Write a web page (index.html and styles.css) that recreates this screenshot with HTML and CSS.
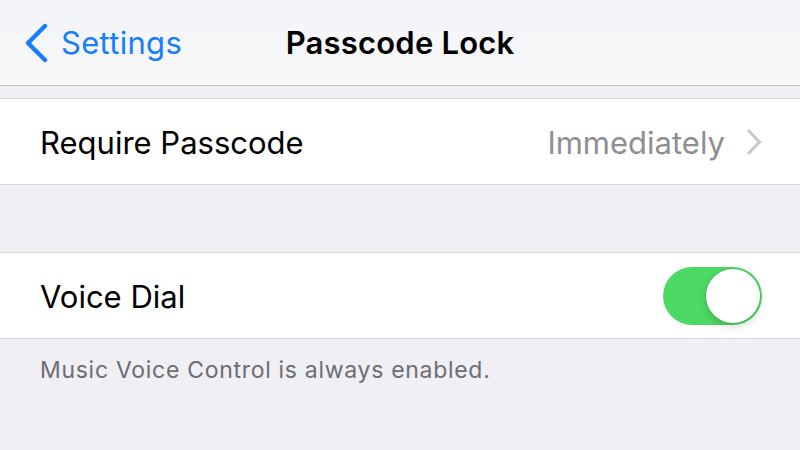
FILE: index.html
```html
<!DOCTYPE html>
<html>
<head>
<meta charset="utf-8">
<link rel="stylesheet" href="styles.css">
</head>
<body>
<header class="nav">
  <a class="back">
    <svg class="back-icon" width="26" height="40" viewBox="0 0 26 40"><path d="M22 3 L5 20 L22 37" fill="none" stroke="#167efb" stroke-width="4.4" stroke-linecap="round" stroke-linejoin="round"/></svg>
    <span class="back-label">Settings</span>
  </a>
  <h1 class="title">Passcode Lock</h1>
</header>
<div class="spacer-top"></div>
<section class="group">
  <div class="row">
    <span class="label">Require Passcode</span>
    <span class="value">Immediately</span>
    <svg class="chev" width="16" height="28" viewBox="0 0 16 28"><path d="M2 2 L13.5 14 L2 26" fill="none" stroke="#c7c7cc" stroke-width="3"/></svg>
  </div>
</section>
<div class="spacer-mid"></div>
<section class="group">
  <div class="row">
    <span class="label">Voice Dial</span>
    <span class="toggle"><span class="knob"></span></span>
  </div>
</section>
<p class="footer">Music Voice Control is always enabled.</p>
</body>
</html>
```

FILE: styles.css
```css
html, body {
  margin: 0;
  padding: 0;
}
body {
  width: 800px;
  height: 450px;
  overflow: hidden;
  background: #efeff4;
  font-family: Inter, "Liberation Sans", sans-serif;
  -webkit-font-smoothing: antialiased;
}
.nav {
  height: 85px;
  border-bottom: 1px solid #c2c2c6;
  background: linear-gradient(#f4f5f9, #f7f7f8);
  display: flex;
  align-items: center;
  position: relative;
}
.back {
  display: flex;
  align-items: center;
  padding-left: 23px;
  color: #167efb;
}
.back-icon {
  display: block;
}
.back-label {
  font-size: 31px;
  margin-left: 12px;
  letter-spacing: 0.3px;
}
.title {
  position: absolute;
  left: 0;
  right: 0;
  top: 0;
  bottom: 0;
  margin: 0;
  display: flex;
  align-items: center;
  justify-content: center;
  font-size: 31px;
  font-weight: 600;
  letter-spacing: 0.2px;
  color: #000;
  pointer-events: none;
}
.spacer-top {
  height: 12px;
}
.spacer-mid {
  height: 67px;
}
.group {
  background: #fff;
  border-top: 1px solid #d7d7dc;
  border-bottom: 1px solid #d7d7dc;
}
.row {
  height: 85px;
  display: flex;
  align-items: center;
  padding: 0 38px 0 40px;
}
.label {
  font-size: 31px;
  padding-top: 2px;
  color: #000;
  flex: 1;
}
.value {
  font-size: 31px;
  padding-top: 2px;
  color: #8e8e93;
  margin-right: 21px;
}
.chev {
  display: block;
}
.toggle {
  width: 99px;
  height: 58px;
  border-radius: 29px;
  background: #4cd964;
  position: relative;
  display: block;
}
.knob {
  position: absolute;
  right: 2px;
  top: 2px;
  width: 54px;
  height: 54px;
  border-radius: 50%;
  background: #fff;
  box-shadow: 0 3px 8px rgba(0,0,0,0.18), 0 0 0 0.5px rgba(0,0,0,0.08);
}
.footer {
  margin: 0;
  padding: 17px 0 0 40px;
  font-size: 23px;
  letter-spacing: 0.7px;
  line-height: 28px;
  color: #6d6d72;
}
```
